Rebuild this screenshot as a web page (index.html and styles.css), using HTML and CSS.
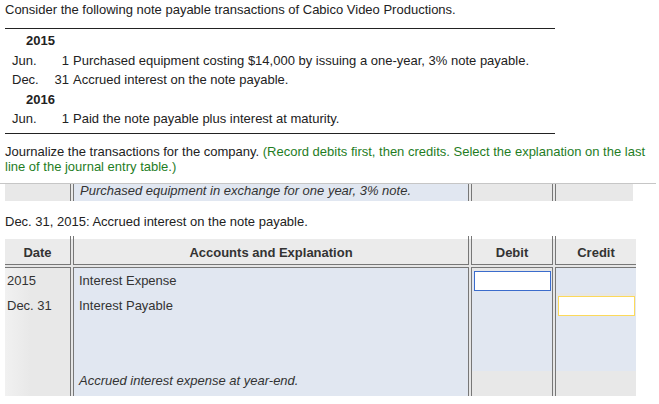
FILE: index.html
```html
<!DOCTYPE html>
<html lang="en">
<head>
  <meta charset="UTF-8" />
  <title>Note payable journal entries</title>
  <link rel="stylesheet" href="styles.css">
</head>
<body>
<div class="page">
  <p class="intro">Consider the following note payable transactions of Cabico Video Productions.</p>

  <div class="txns">
    <div class="year">2015</div>
    <div class="txn">
      <span class="month">Jun.</span><span class="day">1</span>
      <span class="desc">Purchased equipment costing $14,000 by issuing a one-year, 3% note payable.</span>
    </div>
    <div class="txn">
      <span class="month">Dec.</span><span class="day">31</span>
      <span class="desc">Accrued interest on the note payable.</span>
    </div>
    <div class="year">2016</div>
    <div class="txn">
      <span class="month">Jun.</span><span class="day">1</span>
      <span class="desc">Paid the note payable plus interest at maturity.</span>
    </div>
  </div>

  <p class="task">Journalize the transactions for the company. <span class="hint">(Record debits first, then credits. Select the explanation on the last line of the journal entry table.)</span></p>

  <div class="prev">
    <div class="journal-prev">
      <div class="pc date"></div>
      <div class="pc acct"><span class="memo">Purchased equipment in exchange for one year, 3% note.</span></div>
      <div class="pc money"></div>
      <div class="pc money last"></div>
    </div>
  </div>

  <p class="entry-title">Dec. 31, 2015: Accrued interest on the note payable.</p>

  <div class="journal">
    <div class="tick date"></div>
    <div class="tick acct"></div>
    <div class="tick money"></div>
    <div class="tick money last"></div>

    <div class="th date">Date</div>
    <div class="th acct">Accounts and Explanation</div>
    <div class="th money">Debit</div>
    <div class="th money last">Credit</div>

    <div class="td date">
      <div class="line">2015</div>
      <div class="line">Dec. 31</div>
    </div>
    <div class="td acct">
      <div class="line">Interest Expense</div>
      <div class="line">Interest Payable</div>
      <div class="line"></div>
      <div class="line"></div>
      <div class="line memo">Accrued interest expense at year-end.</div>
    </div>
    <div class="td money">
      <div class="line"><input class="amount" type="text"></div>
      <div class="line"></div>
      <div class="line"></div>
      <div class="line"></div>
      <div class="line total"></div>
    </div>
    <div class="td money last">
      <div class="line"></div>
      <div class="line"><input class="amount pending" type="text"></div>
      <div class="line"></div>
      <div class="line"></div>
      <div class="line total"></div>
    </div>
  </div>
</div>
</body>
</html>
```

FILE: styles.css
```css
body {
  margin: 0;
  background: #ffffff;
  font-family: "Liberation Sans", Arial, Helvetica, sans-serif;
  font-size: 13px;
  color: #222;
}

.page {
  padding: 0 5px;
}

.intro {
  margin: 0 0 10px;
  padding-top: 2px;
  line-height: 16px;
}

/* transaction list */
.txns {
  width: 550px;
  border-top: 1px solid #222;
  border-bottom: 1px solid #222;
  padding: 2px 0 4px;
}

.year,
.txn {
  line-height: 19.6px;
  height: 19.6px;
}

.year {
  font-weight: bold;
  padding-left: 21px;
}

.txn {
  display: flex;
}

.month {
  width: 41px;
  padding-left: 7px;
}

.day {
  width: 16px;
  text-align: right;
}

.desc {
  margin-left: 4px;
}

.task {
  margin: 10px 0 0;
  line-height: 15px;
  width: 649px;
}

.hint {
  color: #1f7d1f;
}

/* previous entry, scrolled mostly out of view */
.prev {
  margin: 9px -2px 0 -5px;
  padding-left: 5px;
  border-top: 1px solid #c6c6c6;
}

.journal-prev {
  display: grid;
  grid-template-columns: 66px 396px 82px 78px;
  column-gap: 2px;
  background: #e8e8e8;
  width: 628px;
}

.pc {
  height: 17px;
  box-sizing: border-box;
  background: #e8e8e8;
  color: #333;
}

.pc.acct {
  background: #e1e7f1;
  padding-left: 6px;
  line-height: 13px;
}

.memo {
  font-style: italic;
}

.entry-title {
  margin: 13px 0 0;
  line-height: 16px;
}

/* journal entry table */
.journal {
  margin-top: 6px;
  display: grid;
  grid-template-columns: 66px 396px 82px 81px;
  column-gap: 2px;
  width: 631px;
  background: linear-gradient(to bottom, transparent 3px, #e6e6e6 3px);
  color: #333;
}

.date,
.acct,
.money {
  box-sizing: border-box;
}

.date {
  border-right: 1px solid #777;
}

.acct,
.money {
  border-left: 1px solid #777;
  border-right: 1px solid #777;
}

.money.last {
  border-right: none;
}

.tick {
  height: 3px;
  background: #fff;
}

.th {
  background: #ebebeb;
  border-bottom: 1px solid #777;
  font-weight: bold;
  text-align: center;
  padding-top: 2px;
  line-height: 23px;
}

.td {
  margin-top: 2px;
  border-top: 1px solid #777;
}

.td .line {
  height: 25px;
  line-height: 25px;
}

.td.date {
  background: linear-gradient(to right, #f1f1f1, #e8e8e8 40%);
}

.td.date .line {
  padding-left: 2px;
}

.td.acct {
  background: #e1e7f1;
}

.td.acct .line {
  padding-left: 5px;
}

.td.money .line {
  background: #e1e7f1;
}

.td.money .line.total {
  background: #e8e8e8;
}

.amount {
  display: block;
  box-sizing: border-box;
  width: 77px;
  height: 20px;
  margin: 3px 0 0 2px;
  padding: 0 3px;
  border: 1px solid #3b6ccc;
  background: #fff;
  font: inherit;
  outline: none;
}

.amount.pending {
  border-color: #fcd95a;
}
```
